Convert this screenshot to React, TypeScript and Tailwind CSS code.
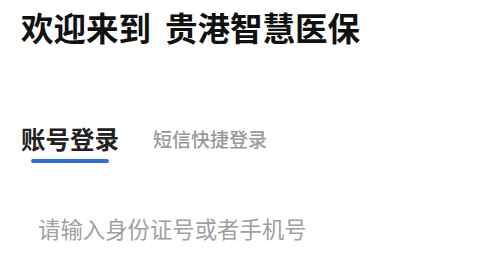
import { useState } from "react";

const font = "font-['Noto_Sans_CJK_SC',sans-serif]";

export default function App() {
  const [tab, setTab] = useState<"account" | "sms">("account");
  const [value, setValue] = useState("");

  return (
    <div className={`w-[502px] h-[255px] bg-white overflow-hidden ${font}`}>
      {/* Title */}
      <h1 className="pl-[21px] pt-[5px] text-[32.5px] leading-[44px] font-bold text-[#111]">
        欢迎来到<span className="ml-[14px]">贵港智慧医保</span>
      </h1>

      {/* Tabs */}
      <div className="mt-[74px] pl-[21px] flex items-end gap-[34px]">
        <button
          onClick={() => setTab("account")}
          className="flex flex-col items-center"
        >
          <span
            className={`text-[24.5px] leading-[32px] ${
              tab === "account" ? "font-bold text-[#222]" : "font-medium text-[#999]"
            }`}
          >
            账号登录
          </span>
          <span
            className={`mt-[4px] h-[4px] w-[78px] rounded-full ${
              tab === "account" ? "bg-[#2f6ee0]" : "bg-transparent"
            }`}
          />
        </button>
        <button
          onClick={() => setTab("sms")}
          className="flex flex-col items-center"
        >
          <span
            className={`text-[19px] leading-[32px] ${
              tab === "sms" ? "font-bold text-[#222]" : "font-medium text-[#999]"
            }`}
          >
            短信快捷登录
          </span>
          <span
            className={`mt-[4px] h-[4px] w-[78px] rounded-full ${
              tab === "sms" ? "bg-[#2f6ee0]" : "bg-transparent"
            }`}
          />
        </button>
      </div>

      {/* Input */}
      <div className="mt-[49px] pl-[38px] pr-[20px]">
        <input
          value={value}
          onChange={(e) => setValue(e.target.value)}
          placeholder="请输入身份证号或者手机号"
          className={`w-full text-[22.4px] leading-[32px] text-[#333] placeholder:text-[#a0a0a0] outline-none bg-transparent ${font}`}
        />
      </div>
    </div>
  );
}
